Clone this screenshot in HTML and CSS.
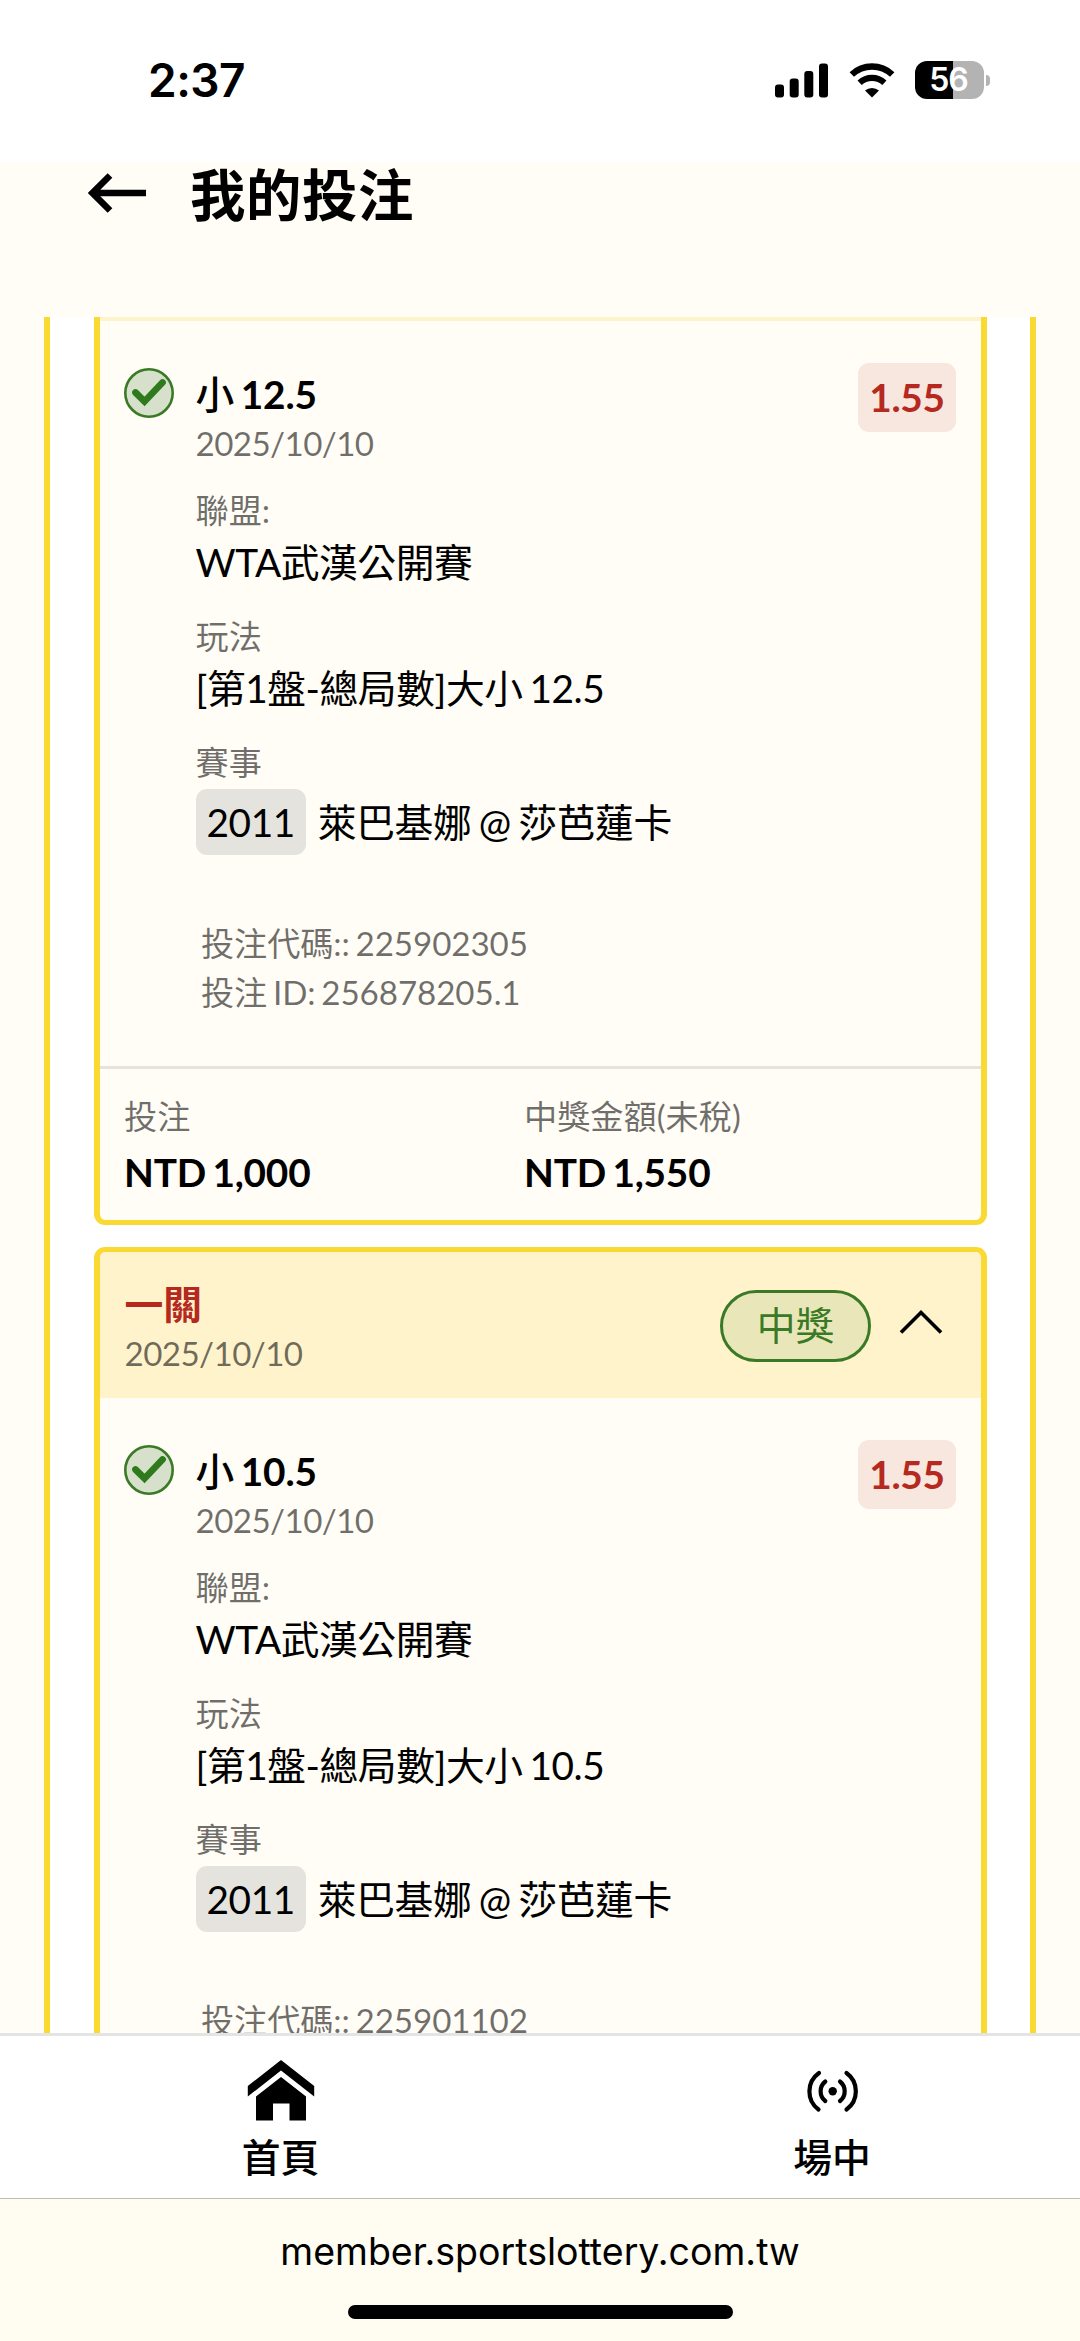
FILE: index.html
```html
<!DOCTYPE html>
<html lang="zh-Hant">
<head>
<meta charset="utf-8">
<title>我的投注</title>
<link rel="stylesheet" href="styles.css">
</head>
<body>
<div class="screen">
  <div class="status">
    <span class="time">2:37</span>
    <div class="status-icons">
      <svg class="signal" width="53" height="35" viewBox="0 0 53 35"><rect x="0" y="21.5" width="9" height="13" rx="3"/><rect x="14.7" y="15.5" width="9" height="19" rx="3"/><rect x="29.3" y="8" width="9" height="26.500" rx="3"/><rect x="44" y="0.500" width="9" height="34" rx="3"/></svg>
      <svg class="wifi" width="46" height="35" viewBox="0 0 46 35"><path d="M2.800 11.500 A29.500 29.500 0 0 1 43.200 11.500" fill="none" stroke="#000" stroke-width="6.400"/><path d="M10.600 19.700 A18.500 18.500 0 0 1 35.400 19.700" fill="none" stroke="#000" stroke-width="6.200"/><path d="M23 34.500 L16 27.600 A10.500 10.500 0 0 1 30 27.600 Z"/></svg>
      <div class="battery"><span class="battery-level">56</span><i class="battery-nub"></i></div>
    </div>
  </div>

  <header class="header">
    <svg class="back" width="60" height="40" viewBox="0 0 60 40"><path d="M58 20 H5 M22 2.500 L4.500 20 L22 37.500" fill="none" stroke="#000" stroke-width="6.600"/></svg>
    <h1 class="title">我的投注</h1>
  </header>

  <main class="scroll">
    <div class="list">
      <article class="card card--clipped">
        <div class="card-head card-head--edge"></div>
        <div class="card-body">
          <svg class="check" width="50" height="50" viewBox="0 0 50 50"><circle cx="25" cy="25" r="23.700" fill="#d6e0cb" stroke="#3a7a26" stroke-width="2.600"/><path d="M11.500 24.500 L20.500 33.500 L38.500 14.500" fill="none" stroke="#2f7a1c" stroke-width="6.800" stroke-linecap="round"/></svg>
          <div class="info">
            <div class="pick"><span class="han">小</span> 12.5</div>
            <div class="date">2025/10/10</div>
            <div class="group"><div class="label">聯盟:</div><div class="value">WTA武漢公開賽</div></div>
            <div class="group"><div class="label">玩法</div><div class="value">[第1盤-總局數]大小 12.5</div></div>
            <div class="group"><div class="label">賽事</div><div class="match"><span class="chip">2011</span><span>萊巴基娜 @ 莎芭蓮卡</span></div></div>
            <div class="codes"><div>投注代碼:: 225902305</div><div>投注 ID: 256878205.1</div></div>
          </div>
          <div class="odds">1.55</div>
        </div>
        <div class="card-foot">
          <div><div class="label">投注</div><div class="amount">NTD 1,000</div></div>
          <div><div class="label">中獎金額(未稅)</div><div class="amount">NTD 1,550</div></div>
        </div>
      </article>

      <article class="card">
        <div class="card-head">
          <div class="head-text"><div class="legs">一關</div><div class="date">2025/10/10</div></div>
          <span class="pill">中獎</span>
          <svg class="chevron" width="44" height="26" viewBox="0 0 44 26"><path d="M2 23.500 L22 3.500 L42 23.500" fill="none" stroke="#000" stroke-width="3.600"/></svg>
        </div>
        <div class="card-body">
          <svg class="check" width="50" height="50" viewBox="0 0 50 50"><circle cx="25" cy="25" r="23.700" fill="#d6e0cb" stroke="#3a7a26" stroke-width="2.600"/><path d="M11.500 24.500 L20.500 33.500 L38.500 14.500" fill="none" stroke="#2f7a1c" stroke-width="6.800" stroke-linecap="round"/></svg>
          <div class="info">
            <div class="pick"><span class="han">小</span> 10.5</div>
            <div class="date">2025/10/10</div>
            <div class="group"><div class="label">聯盟:</div><div class="value">WTA武漢公開賽</div></div>
            <div class="group"><div class="label">玩法</div><div class="value">[第1盤-總局數]大小 10.5</div></div>
            <div class="group"><div class="label">賽事</div><div class="match"><span class="chip">2011</span><span>萊巴基娜 @ 莎芭蓮卡</span></div></div>
            <div class="codes"><div>投注代碼:: 225901102</div></div>
          </div>
          <div class="odds">1.55</div>
        </div>
      </article>
    </div>
  </main>

  <nav class="tabs">
    <a class="tab"><svg width="68" height="62" viewBox="0 0 68 62"><path d="M34 1 L67.200 27 V37.500 L34 11.500 L0.800 37.500 V27 Z"/><path d="M34 18 L59 37.500 V61.500 H42.500 V44.500 H26 V61.500 H9 V37.500 Z"/></svg><span>首頁</span></a>
    <a class="tab"><svg width="68" height="62" viewBox="0 0 68 62"><g fill="none" stroke="#000" stroke-width="4.200" stroke-linecap="round"><path d="M21 14 A22.500 22.500 0 0 0 20.500 50.500"/><path d="M48.500 14 A22.500 22.500 0 0 1 48.500 50.500"/><path d="M27.300 22.500 A12.500 12.500 0 0 0 27.300 42"/><path d="M42 22.500 A12.500 12.500 0 0 1 42 42"/></g><circle cx="34.700" cy="32.200" r="4.200"/></svg><span>場中</span></a>
  </nav>

  <footer class="browser">
    <div class="url">member.sportslottery.com.tw</div>
    <div class="home-bar"></div>
  </footer>
</div>
</body>
</html>
```

FILE: styles.css
```css
* { box-sizing: border-box; }

body {
  margin: 0;
  background: #fffdf5;
  color: #000;
  font-family: Lato, "Noto Sans CJK TC", sans-serif;
  font-size: 38.77px;
  line-height: 54px;
}

svg { display: block; flex: none; }

.screen {
  width: 1080px;
  height: 2341px;
  display: flex;
  flex-direction: column;
  overflow: hidden;
}

/* Status bar */
.status {
  flex: none;
  height: 162px;
  padding: 0 90px 2px 148px;
  display: flex;
  justify-content: space-between;
  align-items: center;
  background: #fff;
  font-family: Inter, sans-serif;
}
.time { font-size: 46px; font-weight: 600; letter-spacing: -0.5px; }
.status-icons { display: flex; align-items: center; }
.wifi { margin-left: 21px; }
.battery { display: flex; align-items: center; margin-left: 20px; }
.battery-level {
  width: 69px;
  height: 38px;
  padding-right: 2px;
  border-radius: 12px;
  background: linear-gradient(90deg, #000 38.5px, #b3b3b3 38.5px);
  color: #fff;
  font-size: 32px;
  font-weight: 600;
  line-height: 38px;
  text-align: center;
  letter-spacing: -1px;
}
.battery-nub {
  width: 4px;
  height: 11px;
  margin-left: 2px;
  border-radius: 0 4px 4px 0;
  background: #b3b3b3;
}

/* Page header */
.header {
  flex: none;
  height: 155px;
  padding: 0 0 0 88px;
  display: flex;
  align-items: flex-start;
}
.back { margin-top: 11px; }
.title {
  margin: 1.5px 0 0 42px;
  font-size: 55.4px;
  font-weight: 700;
  line-height: 62px;
  letter-spacing: 0.6px;
}

/* Bet list */
.scroll { flex: none; height: 1716px; overflow: hidden; }
.list {
  width: 992px;
  margin-left: 44px;
  padding: 0 43.5px;
  border: solid #fad933;
  border-width: 0 6px;
  background: #fff;
  height: 1900px;
  display: flex;
  flex-direction: column;
  gap: 22px;
}
.card {
  flex: none;
  border: solid #fad933;
  border-width: 5px 6px;
  border-radius: 11px;
  background: #fffdf5;
  overflow: hidden;
}
.card--clipped { border-top: 0; border-radius: 0 0 11px 11px; }

.card-head {
  height: 146px;
  padding: 25.5px 37.5px 0 25px;
  display: flex;
  align-items: flex-start;
  background: #fff3cc;
}
.card-head--edge { height: 4px; padding: 0; }
.head-text { flex: 1; }
.legs { color: #b5291e; font-weight: 700; line-height: 53px; }
.pill {
  width: 151px;
  height: 72px;
  margin-top: 12.5px;
  border: 3px solid #3a7a26;
  border-radius: 36px;
  background: #e9e7b9;
  color: #3a7a26;
  line-height: 65px;
  text-align: center;
}
.chevron { margin: 31.5px 0 0 28px; }

.card-body {
  height: 745px;
  padding: 0 24.5px 0 24px;
  display: flex;
  align-items: flex-start;
}
.check { margin-top: 47px; }
.info { flex: 1; margin: 46px 0 0 22px; }
.pick { font-weight: 700; word-spacing: -2.8px; letter-spacing: -0.1px; }
.han { font-weight: 500; }
.date, .label { font-size: 33.2px; line-height: 44px; color: rgba(0, 0, 0, 0.57); }
.date { letter-spacing: -0.6px; }
.label { line-height: 46px; }
.group { margin-top: 23.8px; }
.date + .group { margin-top: 21.5px; }
.value { margin-top: 2.5px; letter-spacing: -0.45px; word-spacing: -2.5px; }
.match {
  display: flex;
  align-items: center;
  gap: 12px;
  margin-top: 3.5px;
  letter-spacing: -0.4px;
  word-spacing: -2px;
}
.chip {
  height: 66px;
  padding: 0 11px;
  border-radius: 11px;
  background: #e5e3de;
  line-height: 66px;
}
.codes {
  margin: 64px 0 0 5.5px;
  font-size: 33.2px;
  line-height: 49.8px;
  color: rgba(0, 0, 0, 0.57);
  letter-spacing: -0.1px;
  word-spacing: -2.6px;
}
.odds {
  width: 98px;
  height: 69px;
  margin-top: 42px;
  border-radius: 11px;
  background: #f7e7df;
  color: #b5291e;
  font-weight: 700;
  line-height: 69px;
  text-align: center;
  letter-spacing: -0.3px;
}

.card-foot {
  height: 154px;
  padding: 24px 25px 0 24.5px;
  border-top: 3px solid #e5e3de;
  display: grid;
  grid-template-columns: 400px 1fr;
}
.amount { margin-top: 6px; font-weight: 700; letter-spacing: -0.2px; word-spacing: -2.8px; }

/* Bottom navigation */
.tabs {
  flex: none;
  height: 166px;
  border-top: 3px solid #e4e4e4;
  border-bottom: 1px solid #bdbcb6;
  background: #fff;
  display: grid;
  grid-template-columns: 561px 542px;
}
.tab {
  padding-top: 23px;
  display: flex;
  flex-direction: column;
  align-items: center;
  gap: 8.5px;
  font-weight: 500;
}

/* Browser bar */
.browser {
  flex: 1;
  padding-top: 26px;
  display: flex;
  flex-direction: column;
  align-items: center;
  background: #fffcf2;
  font-family: Inter, sans-serif;
}
.url { font-size: 37.5px; line-height: 54px; }
.home-bar {
  width: 385px;
  height: 14px;
  margin-top: 26px;
  border-radius: 7px;
  background: #000;
}
```
